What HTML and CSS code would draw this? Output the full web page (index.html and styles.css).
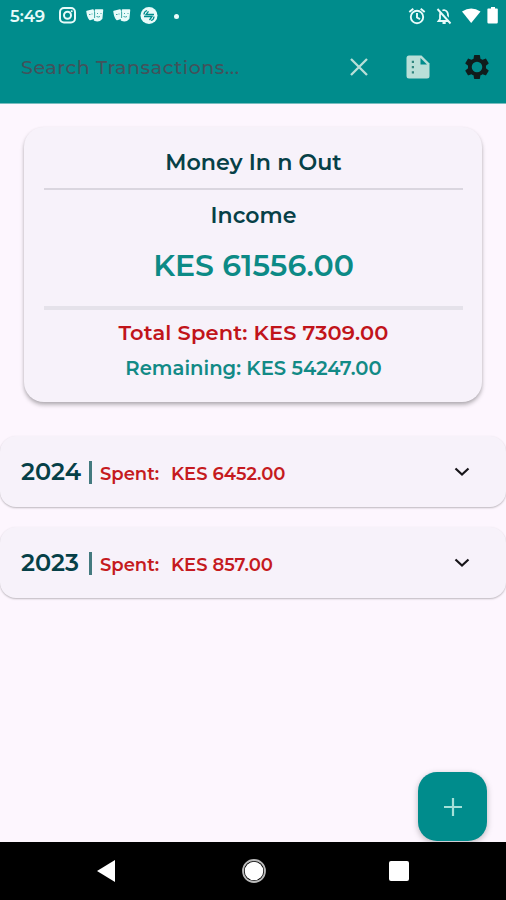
FILE: index.html
```html
<!DOCTYPE html>
<html lang="en">
<head>
<meta charset="utf-8">
<title>Money In n Out</title>
<link rel="stylesheet" href="styles.css">
</head>
<body>
<div class="app">
  <header class="top">
    <div class="status">
      <span class="clock">5:49</span>
      <svg class="notifications" width="114" height="20" viewBox="0 0 114 20">
        <g fill="none" stroke="#e8fbfa" stroke-width="2"><rect x="2" y="2" width="15" height="14.500" rx="4"/><circle cx="9.500" cy="9.300" r="3.500"/></g>
        <circle cx="13.700" cy="5.200" r="1" fill="#e8fbfa"/>
        <g id="masks">
          <path d="M29 5.500l6-1.500 1.500 8-4.500 1.500q-2-1-3-8z" fill="#e8fbfa" stroke="#e8fbfa" stroke-width="1.500" stroke-linejoin="round"/>
          <path d="M37.500 4h7l-.8 8.500q-3 3.500-7.200 1.500z" fill="#e8fbfa" stroke="#e8fbfa" stroke-width="1.500" stroke-linejoin="round"/>
          <path d="M31 8.500h1.500M34 7.500v1M39 7.500h1m2.500 0h1m-5 3q2 1 3.500 0M36.600 6v6" fill="none" stroke="#3aa5a4" stroke-width="1"/>
        </g>
        <use href="#masks" x="27"/>
        <circle cx="91" cy="9.500" r="8.500" fill="#e8fbfa"/>
        <path d="M96 8.500h-8l2.500-3.200M86 10.500h8l-2.500 3.500M86 8.500q0-3 3-4M96 10.500q0 3-3 4" fill="none" stroke="#008c8c" stroke-width="1.300"/>
      </svg>
      <span class="dot"></span>
      <svg class="system" width="92" height="22" viewBox="0 0 92 22">
        <g fill="none" stroke="#e8fbfa" stroke-width="1.900"><circle cx="11" cy="12" r="6.200"/><path d="M11 8v4.500l3 1.700M3.300 7l4-3.300M18.700 7l-4-3.300"/></g>
        <path d="M34 16h9.500l-1.500-2V10q0-4-4-5-4 1-4 5v4l-1.500 2z" fill="none" stroke="#e8fbfa" stroke-width="1.800"/>
        <path d="M36.500 18h3.200" stroke="#e8fbfa" stroke-width="2"/>
        <path d="M33 3.500 46 18" stroke="#008c8c" stroke-width="2.500"/>
        <path d="M31.500 4 44.500 18.500" stroke="#e8fbfa" stroke-width="1.900"/>
        <path d="M56 6.500q9.200-6 18.500 0L65.200 18z" fill="#fff"/>
        <path d="M83 3.500h2V2h4v1.500h2q.8 0 .8.800v13q0 1.200-1.200 1.200h-8q-1.200 0-1.200-1.200v-13q0-.8.800-.8z" fill="#fff"/>
      </svg>
    </div>
    <div class="search">
      <span class="placeholder">Search Transactions...</span>
      <svg class="icon-close" width="20" height="20" viewBox="0 0 20 20"><path d="M2 2 18 18M18 2 2 18" stroke="#b9dfd8" stroke-width="2.300"/></svg>
      <svg class="icon-note" width="24" height="24" viewBox="0 0 24 24">
        <path d="M3 .5h12.500l8 8V21q0 2.500-2.500 2.500H3Q.5 23.500.5 21V3Q.5.5 3 .5z" fill="#b9dfd8"/>
        <path d="M14.500 3v6.500H21z" fill="#008c8c"/>
        <path d="M5.800 5.800H8V8H5.800zM5.800 11H8v2.200H5.800zM5.800 16.200H8v2.200H5.800z" fill="#32867f"/>
      </svg>
      <svg class="icon-gear" width="24" height="24" viewBox="2 2 20 20"><path fill="#101c1c" fill-rule="evenodd" d="M19.430 12.980c.04-.32.070-.64.070-.98s-.03-.66-.07-.98l2.110-1.650c.19-.15.240-.42.120-.64l-2-3.460c-.12-.22-.39-.3-.61-.22l-2.490 1c-.52-.4-1.080-.73-1.690-.98l-.38-2.650C14.460 2.180 14.250 2 14 2h-4c-.25 0-.46.180-.49.420l-.38 2.650c-.61.250-1.170.59-1.690.98l-2.490-1c-.23-.09-.49 0-.61.220l-2 3.460c-.13.220-.07.49.120.64l2.110 1.650c-.04.320-.07.650-.07.980s.03.660.070.980l-2.110 1.650c-.19.150-.24.420-.12.640l2 3.460c.12.220.39.3.61.220l2.490-1c.52.4 1.080.73 1.690.98l.38 2.650c.03.240.24.420.49.420h4c.25 0 .46-.18.49-.42l.38-2.650c.61-.25 1.170-.59 1.690-.98l2.490 1c.23.090.49 0 .61-.22l2-3.460c.12-.22.070-.49-.12-.64zM12 16.400a4.400 4.400 0 1 1 0-8.800 4.400 4.400 0 0 1 0 8.800z"/></svg>
    </div>
  </header>

  <main class="content">
    <section class="summary">
      <h1 class="title">Money In n Out</h1>
      <h2 class="label">Income</h2>
      <p class="income">KES 61556.00</p>
      <p class="spent-total">Total Spent: KES 7309.00</p>
      <p class="remaining">Remaining: KES 54247.00</p>
    </section>
    <section class="year">
      <span class="year-name">2024</span><span class="bar"></span><span class="spent">Spent:</span><span class="amount">KES 6452.00</span>
      <svg class="chevron" width="16" height="10" viewBox="0 0 16 10"><path d="m1.500 1.500 6.500 6 6.500-6" fill="none" stroke="#171519" stroke-width="2.200"/></svg>
    </section>
    <section class="year">
      <span class="year-name">2023</span><span class="bar"></span><span class="spent">Spent:</span><span class="amount">KES 857.00</span>
      <svg class="chevron" width="16" height="10" viewBox="0 0 16 10"><path d="m1.500 1.500 6.500 6 6.500-6" fill="none" stroke="#171519" stroke-width="2.200"/></svg>
    </section>
    <div class="fab"><svg width="18" height="18" viewBox="0 0 18 18"><path d="M9 0v18M0 9h18" stroke="#a5e0d8" stroke-width="2.200"/></svg></div>
  </main>

  <nav class="nav">
    <svg width="18" height="22" viewBox="0 0 18 22"><path d="M18 0v22L0 11z" fill="#fff"/></svg>
    <svg class="home" width="24" height="24" viewBox="0 0 24 24"><circle cx="12" cy="12" r="11" fill="none" stroke="#bbb" stroke-width="1.800"/><circle cx="12" cy="12" r="9.300" fill="#fff"/></svg>
    <svg width="20" height="20" viewBox="0 0 20 20"><rect width="20" height="20" rx="2" fill="#fff"/></svg>
  </nav>
</div>
</body>
</html>
```
FILE: styles.css
```css
* { box-sizing: border-box; }
body { margin: 0; font-family: Montserrat, Inter, "Liberation Sans", sans-serif; background: #fdf6fe; }
h1, h2, p { margin: 0; font-weight: 600; white-space: nowrap; }
svg { display: block; flex: none; }
span { white-space: nowrap; }
.app { width: 506px; height: 900px; display: flex; flex-direction: column; overflow: hidden; }

.top { height: 104px; background: #008c8c; flex: none; border-bottom: 1px solid #79bdbf; }
.status { height: 32px; display: flex; align-items: center; padding: 0 8px 0 10px; }
.clock { width: 48px; color: #e8fbfa; font-size: 16.500px; font-weight: 600; line-height: 20px; }
.dot { width: 5px; height: 5px; border-radius: 50%; background: #e8fbfa; margin-left: 2px; }
.system { margin-left: auto; }
.search { height: 70px; display: flex; align-items: center; padding: 0 17px 0 21px; }
.placeholder { color: #42525b; font-size: 19px; font-weight: 500; letter-spacing: .6px; flex: 1; }
.icon-note { margin: 0 35px 0 37px; }

.content { flex: 1; display: flex; flex-direction: column; position: relative; padding-top: 23px; }
.summary { width: 458px; height: 275px; flex: none; margin: 0 auto 34px; padding: 0 19px 0 20px; border-radius: 20px; background: #f7f2fa; text-align: center; box-shadow: 0 3px 4px rgba(0,0,0,.26), 0 1px 3px rgba(0,0,0,.08); }
.title { height: 63px; padding-top: 23px; border-bottom: 2px solid #dad6df; color: #064047; font-size: 22.200px; line-height: 26px; }
.label { height: 54px; padding-top: 13px; color: #064047; font-size: 22px; line-height: 26px; }
.income { height: 66px; padding-top: 4px; border-bottom: 4px solid #e5e2ea; color: #0c8a86; font-size: 30px; line-height: 36px; }
.spent-total { height: 36px; padding-top: 10px; color: #c1141a; font-size: 21px; line-height: 26px; letter-spacing: .15px; }
.remaining { height: 36px; padding-top: 9px; color: #128a86; font-size: 19.600px; line-height: 26px; }

.year { height: 71px; flex: none; margin-bottom: 20px; padding: 0 36px 0 21px; border-radius: 16px; background: #f7f2fa; display: flex; align-items: center; box-shadow: 0 1px 2px rgba(0,0,0,.26); }
.year-name { width: 68px; color: #064047; font-size: 24px; font-weight: 600; }
.bar { width: 3px; height: 23px; background: #447a7f; margin: 2px 8px 0 0; }
.spent, .amount { color: #c51a20; font-size: 18px; font-weight: 600; padding-top: 5px; }
.spent { width: 71px; }
.chevron { margin-left: auto; }

.fab { position: absolute; right: 19px; bottom: 1px; width: 69px; height: 69px; border-radius: 19px; background: #008c8c; display: flex; align-items: center; justify-content: center; box-shadow: 0 2px 6px rgba(0,0,0,.26); }
.nav { height: 58px; flex: none; background: #000; display: flex; align-items: center; justify-content: space-between; padding: 0 97px; }
.home { margin-left: 3px; }
```
